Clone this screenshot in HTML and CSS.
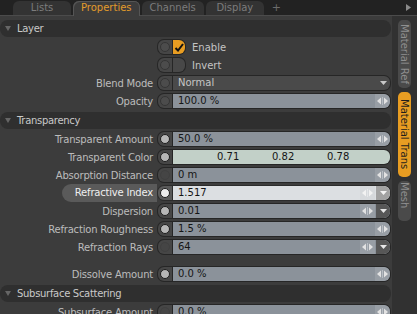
FILE: index.html
```html
<!DOCTYPE html>
<html lang="en">
<head>
    <meta charset="UTF-8">
    <title>Properties</title>
    <link rel="stylesheet" href="styles.css">
</head>
<body>
    <div class="tabbar">
        <div class="tab">Lists</div>
        <div class="tab active">Properties</div>
        <div class="tab">Channels</div>
        <div class="tab">Display</div>
        <span class="add">+</span>
        <svg class="more" width="5" height="7" viewBox="0 0 5 7"><polygon points="0,0 5,3.5 0,7" fill="#8a8a8a"/></svg>
    </div>

    <div class="main">
        <div class="panel">
            <div class="section first"><span class="tri"></span>Layer</div>

            <div class="row">
                <div class="label"></div>
                <div class="toggle">
                    <span class="key"><i class="dot dim"></i></span>
                    <span class="check on">
                        <svg width="10" height="9" viewBox="0 0 10 9"><path d="M1.5 5 L4 7.5 L9 1" fill="none" stroke="#111" stroke-width="2"/></svg>
                    </span>
                </div>
                <span class="opt">Enable</span>
            </div>
            <div class="row">
                <div class="label"></div>
                <div class="toggle">
                    <span class="key"><i class="dot dim"></i></span>
                    <span class="check"></span>
                </div>
                <span class="opt">Invert</span>
            </div>
            <div class="row">
                <div class="label"><span>Blend Mode</span></div>
                <div class="ctrl">
                    <span class="key"><i class="dot dim"></i></span>
                    <div class="field dark">
                        <span class="val">Normal</span>
                        <span class="drop plain"><svg width="7" height="4" viewBox="0 0 7 4"><polygon points="0,0 7,0 3.5,4" fill="#c8c8c8"/></svg></span>
                    </div>
                </div>
            </div>
            <div class="row">
                <div class="label"><span>Opacity</span></div>
                <div class="ctrl">
                    <span class="key"><i class="dot dim"></i></span>
                    <div class="field">
                        <span class="val">100.0 %</span>
                        <span class="spin end"><svg width="11" height="8" viewBox="0 0 11 8"><polygon points="0,4 4,0.5 4,7.5" fill="#e2e2e2"/><rect x="5" y="0" width="1" height="8" fill="#b9bec4"/><polygon points="11,4 7,0.5 7,7.5" fill="#e2e2e2"/></svg></span>
                    </div>
                </div>
            </div>

            <div class="section"><span class="tri"></span>Transparency</div>

            <div class="row">
                <div class="label"><span>Transparent Amount</span></div>
                <div class="ctrl">
                    <span class="key"><i class="dot"></i></span>
                    <div class="field">
                        <span class="val">50.0 %</span>
                        <span class="spin end"><svg width="11" height="8" viewBox="0 0 11 8"><polygon points="0,4 4,0.5 4,7.5" fill="#e2e2e2"/><rect x="5" y="0" width="1" height="8" fill="#b9bec4"/><polygon points="11,4 7,0.5 7,7.5" fill="#e2e2e2"/></svg></span>
                    </div>
                </div>
            </div>
            <div class="row">
                <div class="label"><span>Transparent Color</span></div>
                <div class="ctrl">
                    <span class="key"><i class="dot"></i></span>
                    <div class="field color">
                        <span class="comp">0.71</span>
                        <span class="comp">0.82</span>
                        <span class="comp">0.78</span>
                    </div>
                </div>
            </div>
            <div class="row">
                <div class="label"><span>Absorption Distance</span></div>
                <div class="ctrl">
                    <span class="key"><i class="dot off"></i></span>
                    <div class="field">
                        <span class="val">0 m</span>
                        <span class="spin end"><svg width="11" height="8" viewBox="0 0 11 8"><polygon points="0,4 4,0.5 4,7.5" fill="#e2e2e2"/><rect x="5" y="0" width="1" height="8" fill="#b9bec4"/><polygon points="11,4 7,0.5 7,7.5" fill="#e2e2e2"/></svg></span>
                    </div>
                </div>
            </div>
            <div class="row">
                <div class="label hl"><span>Refractive Index</span></div>
                <div class="ctrl hl">
                    <span class="key"><i class="dot bright"></i></span>
                    <div class="field light">
                        <span class="val">1.517</span>
                        <span class="spin"><svg width="11" height="8" viewBox="0 0 11 8"><polygon points="0,4 4,0.5 4,7.5" fill="#f2f2f2"/><rect x="5" y="0" width="1" height="8" fill="#e4e6e8"/><polygon points="11,4 7,0.5 7,7.5" fill="#f2f2f2"/></svg></span>
                        <span class="drop"><svg width="7" height="4" viewBox="0 0 7 4"><polygon points="0,0 7,0 3.5,4" fill="#f4f4f4"/></svg></span>
                    </div>
                </div>
            </div>
            <div class="row">
                <div class="label"><span>Dispersion</span></div>
                <div class="ctrl">
                    <span class="key"><i class="dot"></i></span>
                    <div class="field">
                        <span class="val">0.01</span>
                        <span class="spin"><svg width="11" height="8" viewBox="0 0 11 8"><polygon points="0,4 4,0.5 4,7.5" fill="#e2e2e2"/><rect x="5" y="0" width="1" height="8" fill="#b9bec4"/><polygon points="11,4 7,0.5 7,7.5" fill="#e2e2e2"/></svg></span>
                        <span class="drop"><svg width="7" height="4" viewBox="0 0 7 4"><polygon points="0,0 7,0 3.5,4" fill="#e8e8e8"/></svg></span>
                    </div>
                </div>
            </div>
            <div class="row">
                <div class="label"><span>Refraction Roughness</span></div>
                <div class="ctrl">
                    <span class="key"><i class="dot"></i></span>
                    <div class="field">
                        <span class="val">1.5 %</span>
                        <span class="spin end"><svg width="11" height="8" viewBox="0 0 11 8"><polygon points="0,4 4,0.5 4,7.5" fill="#e2e2e2"/><rect x="5" y="0" width="1" height="8" fill="#b9bec4"/><polygon points="11,4 7,0.5 7,7.5" fill="#e2e2e2"/></svg></span>
                    </div>
                </div>
            </div>
            <div class="row">
                <div class="label"><span>Refraction Rays</span></div>
                <div class="ctrl">
                    <span class="key"><i class="dot off"></i></span>
                    <div class="field">
                        <span class="val">64</span>
                        <span class="spin"><svg width="11" height="8" viewBox="0 0 11 8"><polygon points="0,4 4,0.5 4,7.5" fill="#e2e2e2"/><rect x="5" y="0" width="1" height="8" fill="#b9bec4"/><polygon points="11,4 7,0.5 7,7.5" fill="#e2e2e2"/></svg></span>
                        <span class="drop"><svg width="7" height="4" viewBox="0 0 7 4"><polygon points="0,0 7,0 3.5,4" fill="#e8e8e8"/></svg></span>
                    </div>
                </div>
            </div>

            <div class="row spaced">
                <div class="label"><span>Dissolve Amount</span></div>
                <div class="ctrl">
                    <span class="key"><i class="dot"></i></span>
                    <div class="field">
                        <span class="val">0.0 %</span>
                        <span class="spin end"><svg width="11" height="8" viewBox="0 0 11 8"><polygon points="0,4 4,0.5 4,7.5" fill="#e2e2e2"/><rect x="5" y="0" width="1" height="8" fill="#b9bec4"/><polygon points="11,4 7,0.5 7,7.5" fill="#e2e2e2"/></svg></span>
                    </div>
                </div>
            </div>

            <div class="section"><span class="tri"></span>Subsurface Scattering</div>

            <div class="row">
                <div class="label"><span>Subsurface Amount</span></div>
                <div class="ctrl">
                    <span class="key"><i class="dot off"></i></span>
                    <div class="field">
                        <span class="val">0.0 %</span>
                        <span class="spin end"><svg width="11" height="8" viewBox="0 0 11 8"><polygon points="0,4 4,0.5 4,7.5" fill="#e2e2e2"/><rect x="5" y="0" width="1" height="8" fill="#b9bec4"/><polygon points="11,4 7,0.5 7,7.5" fill="#e2e2e2"/></svg></span>
                    </div>
                </div>
            </div>
        </div>

        <div class="side">
            <div class="vtab ref">Material Ref</div>
            <div class="vtab active">Material Trans</div>
            <div class="vtab mesh">Mesh</div>
        </div>
    </div>
</body>
</html>
```

FILE: styles.css
```css
body {
    margin: 0;
    width: 417px;
    height: 314px;
    overflow: hidden;
    background-color: #3c3c3c;
    font-family: "DejaVu Sans", sans-serif;
    font-size: 10px;
}
.tabbar {
    display: flex;
    align-items: flex-end;
    height: 15px;
    padding-left: 13px;
    background-color: #222;
    border-bottom: 1px solid #4b4b4b;
}
.tab {
    box-sizing: border-box;
    min-width: 58px;
    height: 14px;
    line-height: 14px;
    padding: 0 8px;
    margin-right: 2px;
    text-align: center;
    color: #7c7c7c;
    background-color: #333;
    border-radius: 6px 6px 0 0;
}
.tab.active {
    height: 15px;
    margin-bottom: -1px;
    color: #e39b2b;
    background-color: #3c3c3c;
    box-shadow: inset 1px 1px 0 #555, inset -1px 0 0 #555;
}
.add {
    margin-left: 6px;
    line-height: 14px;
    font-size: 11px;
    color: #6c6c6c;
}
.more {
    margin: 0 6px 4px auto;
}
.main {
    display: flex;
    height: 298px;
}
.panel {
    width: 392px;
    padding-top: 4px;
}
.side {
    flex: 1;
    padding: 4px 0 0 6px;
    background-color: #313131;
}
.section {
    display: flex;
    align-items: center;
    height: 17px;
    margin: 3px 1px 0 0;
    padding-left: 5px;
    color: #c9c9c9;
    font-size: 10px;
    letter-spacing: -0.3px;
    background-color: #2f2f2f;
    border-radius: 8px;
}
.section.first {
    margin-top: 0;
}
.tri {
    width: 0;
    height: 0;
    margin-right: 6px;
    border-left: 3px solid transparent;
    border-right: 3px solid transparent;
    border-top: 5px solid #666;
}
.row {
    display: flex;
    align-items: center;
    height: 16px;
    margin-top: 2px;
}
.row.spaced {
    margin-top: 11px;
}
.label {
    display: flex;
    justify-content: flex-end;
    flex: none;
    width: 157px;
    color: #bcbcbc;
    letter-spacing: -0.2px;
}
.label span {
    padding-right: 4px;
    white-space: nowrap;
}
.label.hl span {
    height: 18px;
    line-height: 18px;
    margin: -1px 0;
    padding-left: 13px;
    color: #efefef;
    background-color: #5a5a5a;
    border-radius: 9px 0 0 9px;
}
.ctrl {
    display: flex;
    flex: 1;
    box-sizing: border-box;
    height: 16px;
    margin-right: 1px;
    padding: 1px;
    background-color: #262626;
    border-radius: 7px;
}
.ctrl.hl {
    background-color: #2c2c2c;
}
.key {
    display: flex;
    align-items: center;
    justify-content: center;
    width: 14px;
    margin-right: 1px;
    background-color: #464646;
    border-radius: 6px 0 0 6px;
}
.ctrl.hl .key {
    background-color: #5a5a5a;
}
.dot {
    width: 8px;
    height: 8px;
    border-radius: 50%;
    background-color: #b6b6b6;
    border: 1px solid #1d1d1d;
}
.dot.bright {
    background-color: #ececec;
}
.dot.dim {
    background-color: #4c4c4c;
    border-color: #353535;
}
.dot.off {
    background-color: #454545;
    border-color: #404040;
}
.field {
    display: flex;
    align-items: stretch;
    flex: 1;
    padding-left: 5px;
    line-height: 14px;
    color: #151515;
    background-color: #8b929a;
    border-radius: 0 6px 6px 0;
    overflow: hidden;
}
.field.dark {
    color: #c6c6c6;
    background-color: #4a4a4a;
}
.field.light {
    background-color: #dcdfe2;
}
.field.color {
    padding-left: 44px;
    background-color: #c2d0c8;
}
.comp {
    width: 55px;
}
.val {
    flex: 1;
}
.spin {
    display: flex;
    align-items: center;
    justify-content: center;
    width: 15px;
    background-color: #989ea5;
}
.field.light .spin {
    background-color: #d6d9dc;
}
.spin.end {
    border-radius: 0 6px 6px 0;
}
.drop {
    display: flex;
    align-items: center;
    justify-content: center;
    width: 14px;
    margin-left: 1px;
    background-color: #575757;
    border-radius: 0 6px 6px 0;
}
.field.light .drop {
    background-color: #a2a2a2;
}
.drop.plain {
    background-color: transparent;
}
.toggle {
    display: flex;
    box-sizing: border-box;
    width: 29px;
    height: 16px;
    padding: 1px;
    background-color: #262626;
    border-radius: 7px;
}
.check {
    display: flex;
    align-items: center;
    justify-content: center;
    flex: 1;
    background-color: #484848;
    border-radius: 0 6px 6px 0;
}
.check.on {
    background-color: #e89d22;
}
.opt {
    margin-left: 6px;
    color: #c4c4c4;
}
.vtab {
    box-sizing: border-box;
    writing-mode: vertical-rl;
    width: 13px;
    line-height: 13px;
    margin-bottom: 4px;
    text-align: center;
    color: #8f8f8f;
    background-color: #4a4a4a;
    border-radius: 5px;
}
.vtab.ref {
    height: 68px;
}
.vtab.active {
    height: 85px;
    color: #1c1c1c;
    background-color: #e89d22;
}
.vtab.mesh {
    height: 40px;
    padding-top: 1px;
    text-align: start;
}
```
